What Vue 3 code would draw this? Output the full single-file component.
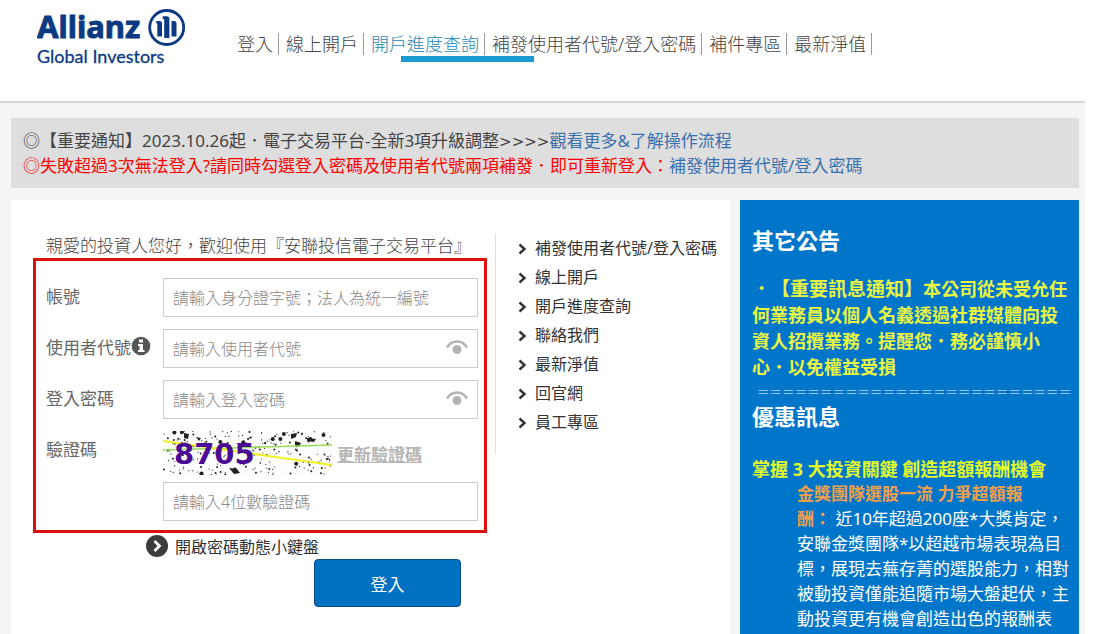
<script setup>
import { ref } from 'vue'

const nav = ['登入', '線上開戶', '開戶進度查詢', '補發使用者代號/登入密碼', '補件專區', '最新淨值']
const current = '開戶進度查詢'
const quickLinks = ['補發使用者代號/登入密碼', '線上開戶', '開戶進度查詢', '聯絡我們', '最新淨值', '回官網', '員工專區']

const account = ref('')
const userCode = ref('')
const password = ref('')
const captcha = ref('')
const showCode = ref(false)
const showPassword = ref(false)

// Deterministic speckles for the captcha background
let seed = 8705
const rand = () => {
  seed = (seed * 16807) % 2147483647
  return seed / 2147483647
}
const specks = Array.from({ length: 230 }, (_, i) => ({
  x: Math.round(rand() * 1680) / 10,
  y: Math.round(rand() * 440) / 10,
  r: i % 16 === 0 ? 2 : i % 3 === 0 ? 1 : 0.6
}))
</script>

<template>
  <div class="page">
    <header class="header">
      <a class="logo" href="#" aria-label="Allianz Global Investors">
        <svg width="152" height="62" viewBox="0 0 152 62">
          <text class="brand" x="0" y="32">Allianz</text>
          <text class="sub" x="0" y="57">Global Investors</text>
          <circle cx="129.700" cy="21.500" r="17" fill="none" stroke="#0b3a82" stroke-width="2.800" />
          <path d="M120.300 30.500V17.500h-1v-2.500h3.200q2.500 0 2.500 2.500v13zM127.200 32V13h-1.500v-2.800h4q2.700 0 2.700 2.700V32zM134.500 30.500V15h2.500q2.500 0 2.500 2.500v13z" fill="#0b3a82" />
        </svg>
      </a>
      <nav class="nav">
        <a v-for="item in nav" :key="item" href="#" :class="{ active: item === current }">{{ item }}</a>
        <span class="marker"></span>
      </nav>
    </header>

    <div class="body">
      <section class="notice">
        <p>◎【重要通知】2023.10.26起．電子交易平台-全新3項升級調整<span class="arrows">&gt;&gt;&gt;&gt;</span><a href="#">觀看更多&amp;了解操作流程</a></p>
        <p class="warn">◎失敗超過3次無法登入?請同時勾選登入密碼及使用者代號兩項補發．即可重新登入：<a href="#">補發使用者代號/登入密碼</a></p>
      </section>

      <div class="columns">
        <main class="panel">
          <form class="login" @submit.prevent>
            <p class="greeting">親愛的投資人您好，歡迎使用『安聯投信電子交易平台』</p>
            <div class="fields">
              <label for="account">帳號</label>
              <input id="account" v-model="account" type="text" placeholder="請輸入身分證字號；法人為統一編號">

              <label for="code">使用者代號<svg width="20" height="20" viewBox="0 0 20 20"><circle cx="10" cy="10" r="9.300" fill="#555" /><path d="M8 3.500h4v3H8zM7 8h5v6h1.500v2h-6.500v-2h1.500v-4H7z" fill="#fff" /></svg></label>
              <div class="secret">
                <input id="code" v-model="userCode" :type="showCode ? 'text' : 'password'" placeholder="請輸入使用者代號">
                <button type="button" aria-label="顯示使用者代號" @click="showCode = !showCode">
                  <svg width="22" height="16" viewBox="0 0 22 16"><path d="M1 8.500C6 .5 16 .5 21 8.500" fill="none" stroke="#b3b3b3" stroke-width="2.600" /><circle cx="11" cy="10.500" r="4.500" fill="#b3b3b3" /></svg>
                </button>
              </div>

              <label for="password">登入密碼</label>
              <div class="secret">
                <input id="password" v-model="password" :type="showPassword ? 'text' : 'password'" placeholder="請輸入登入密碼">
                <button type="button" aria-label="顯示登入密碼" @click="showPassword = !showPassword">
                  <svg width="22" height="16" viewBox="0 0 22 16"><path d="M1 8.500C6 .5 16 .5 21 8.500" fill="none" stroke="#b3b3b3" stroke-width="2.600" /><circle cx="11" cy="10.500" r="4.500" fill="#b3b3b3" /></svg>
                </button>
              </div>

              <label for="captcha">驗證碼</label>
              <div class="verify">
                <div class="captcha">
                  <svg width="169" height="44" viewBox="0 0 169 44">
                    <rect width="169" height="44" fill="#fdfdfd" />
                    <circle v-for="(s, i) in specks" :key="i" :cx="s.x" :cy="s.y" :r="s.r" fill="#222" />
                    <path d="M21 2l5 1-1 5-4-1zM33 6l5 1-2 3zM66 37l8 1 3 4-6 1zM128 3l6-1-1 4-5 2zM132 10l6 2-2 4-4-2zM144 7l9 1-2 3-7-1z" fill="#222" />
                    <path d="M0 19L169 14" stroke="#9bdc5a" stroke-width="1.500" />
                    <path d="M0 10L169 34" stroke="#f3f020" stroke-width="2" />
                    <text class="digits" x="11" y="33">8705</text>
                  </svg>
                  <a href="#">更新驗證碼</a>
                </div>
                <input id="captcha" v-model="captcha" type="text" placeholder="請輸入4位數驗證碼">
              </div>
            </div>
            <button type="button" class="keyboard">
              <svg width="22" height="22" viewBox="0 0 22 22"><circle cx="11" cy="11" r="11" fill="#3c3c3c" /><path d="M8.500 6l5 5-5 5" fill="none" stroke="#fff" stroke-width="2.800" /></svg>
              開啟密碼動態小鍵盤
            </button>
            <button type="submit" class="submit">登入</button>
          </form>

          <ul class="links">
            <li v-for="item in quickLinks" :key="item">
              <a href="#">
                <svg width="9" height="12" viewBox="0 0 9 12"><path d="M1.500 1.500L6.500 6l-5 4.500" fill="none" stroke="#333" stroke-width="2.400" /></svg>{{ item }}
              </a>
            </li>
          </ul>
        </main>

        <aside class="news">
          <h2>其它公告</h2>
          <p class="alert"><span class="title">．【重要訊息通知】</span>本公司從未受允任何業務員以個人名義透過社群媒體向投資人招攬業務。提醒您．務必謹慎小心．以免權益受損</p>
          <p class="rule">=========================</p>
          <h2 class="promo">優惠訊息</h2>
          <h3>掌握 3 大投資關鍵 創造超額報酬機會</h3>
          <p class="detail"><strong>金獎團隊選股一流 力爭超額報<br>酬：</strong> 近10年超過200座*大獎肯定，安聯金獎團隊*以超越市場表現為目標，展現去蕪存菁的選股能力，相對被動投資僅能追隨市場大盤起伏，主動投資更有機會創造出色的報酬表</p>
        </aside>
      </div>
    </div>
  </div>
</template>

<style>
body {
  margin: 0;
  background: #fff;
}
</style>

<style scoped>
* {
  box-sizing: border-box;
}

.page {
  display: flex;
  flex-direction: column;
  min-height: 100vh;
  margin-right: 8px;
  font-family: "Noto Sans", "Noto Sans CJK TC", sans-serif;
  font-size: 17px;
  color: #444;
  text-spacing-trim: space-all;
}

p,
h2,
h3,
ul {
  margin: 0;
  padding: 0;
}

a {
  color: inherit;
  text-decoration: none;
}

svg {
  flex: none;
}

button {
  padding: 0;
  border: 0;
  background: none;
  font-family: inherit;
  cursor: pointer;
}

.header {
  display: flex;
  align-items: flex-start;
  height: 103px;
  padding-left: 37px;
  border-bottom: 2px solid #d8d8d8;
}

.logo {
  display: block;
  width: 193px;
  padding-top: 6px;
}

.brand {
  font: bold 31px "Noto Sans", sans-serif;
  fill: #0b3a82;
  stroke: #0b3a82;
  stroke-width: 0.9px;
}

.sub {
  font: 18px Lato, sans-serif;
  fill: #0b3a82;
  stroke: #0b3a82;
  stroke-width: 0.3px;
}

.nav {
  position: relative;
  display: flex;
  padding-top: 33px;
  font-size: 18px;
  font-weight: 300;
  line-height: 22px;
  white-space: nowrap;
}

.nav a {
  padding: 0 5px 0 7px;
  border-right: 1px solid #999;
}

.nav .active {
  color: #2b87b5;
}

.marker {
  position: absolute;
  left: 171px;
  top: 56px;
  width: 133px;
  height: 6px;
  background: #1b9ad2;
}

.body {
  display: flex;
  flex: 1;
  flex-direction: column;
  gap: 12px;
  padding: 15px 6px 0 11px;
  background: #f5f5f5;
}

.notice {
  padding: 10px 12px;
  background: #dedede;
  line-height: 25px;
}

.notice a {
  color: #3a70ad;
}

.arrows {
  font-family: "DejaVu Sans", sans-serif;
  font-size: 15px;
  line-height: 1;
}

.warn {
  color: #f00;
}

.columns {
  display: grid;
  flex: 1;
  grid-template-columns: 719fr 339fr;
  gap: 10px;
}

.panel {
  display: flex;
  align-items: flex-start;
  min-width: 0;
  padding-top: 34px;
  background: #fff;
}

.login {
  display: flex;
  flex: 1;
  flex-direction: column;
  padding: 0 8px 0 22px;
}

.greeting {
  padding-left: 13px;
  font-weight: 300;
  line-height: 24px;
  white-space: nowrap;
}

.fields {
  display: grid;
  grid-template-columns: 117px 1fr;
  row-gap: 12px;
  padding: 17px 6px 9px 10px;
  border: 3px solid #dc0f0f;
}

.fields label {
  display: flex;
  align-items: center;
  height: 34px;
  color: #666;
}

input {
  display: block;
  width: 100%;
  height: 39px;
  padding: 0 9px;
  border: 1px solid #ccc;
  border-radius: 0;
  background: #fff;
  font-family: inherit;
  font-size: 16px;
  font-weight: 300;
  color: #444;
}

input::placeholder {
  color: #888;
}

.secret {
  position: relative;
}

.secret button {
  position: absolute;
  right: 10px;
  top: 10px;
  height: 16px;
}

.secret svg {
  display: block;
}

.verify {
  display: flex;
  flex-direction: column;
  gap: 7px;
}

.captcha {
  display: flex;
  align-items: center;
  gap: 5px;
}

.captcha a {
  color: #b5b5b5;
  font-weight: bold;
  text-decoration: underline;
}

.digits {
  font: bold 29px "DejaVu Sans", sans-serif;
  fill: #4b0a96;
}

.keyboard {
  display: flex;
  align-items: center;
  gap: 7px;
  height: 26px;
  margin-left: 113px;
  font-size: 16px;
  color: #333;
}

.submit {
  align-self: flex-end;
  width: 147px;
  height: 48px;
  margin-right: 26px;
  border: 1px solid #0a4f8c;
  border-radius: 4px;
  background: #0070c0;
  font-size: 17px;
  color: #fff;
}

.links {
  width: 235px;
  padding: 0 0 17px 22px;
  border-left: 1px solid #d9dde3;
  font-size: 16px;
  line-height: 29px;
  list-style: none;
  white-space: nowrap;
  color: #333;
}

.links a {
  display: flex;
  align-items: center;
  gap: 8px;
}

.news {
  min-width: 0;
  padding: 24px 9px 0 12px;
  background: #0076ca;
  color: #fff;
}

.news h2 {
  font-size: 22px;
  font-weight: bold;
  line-height: 32px;
}

.alert {
  margin-top: 20px;
  font-size: 18px;
  font-weight: bold;
  line-height: 26px;
  color: #e9f542;
}

.title {
  font-size: 19px;
  line-height: 1;
}

.rule {
  margin-top: 2px;
  padding-left: 5px;
  font-family: "DejaVu Sans", sans-serif;
  font-size: 15px;
  font-weight: 200;
  line-height: 20px;
  white-space: nowrap;
}

.news .promo {
  line-height: 28px;
}

.news h3 {
  margin-top: 27px;
  font-size: 18px;
  font-weight: bold;
  line-height: 24px;
  white-space: nowrap;
  color: #e4fb2a;
}

.detail {
  padding-left: 45px;
  line-height: 25px;
}

.detail strong {
  font-weight: bold;
  color: #f0a04b;
}
</style>
